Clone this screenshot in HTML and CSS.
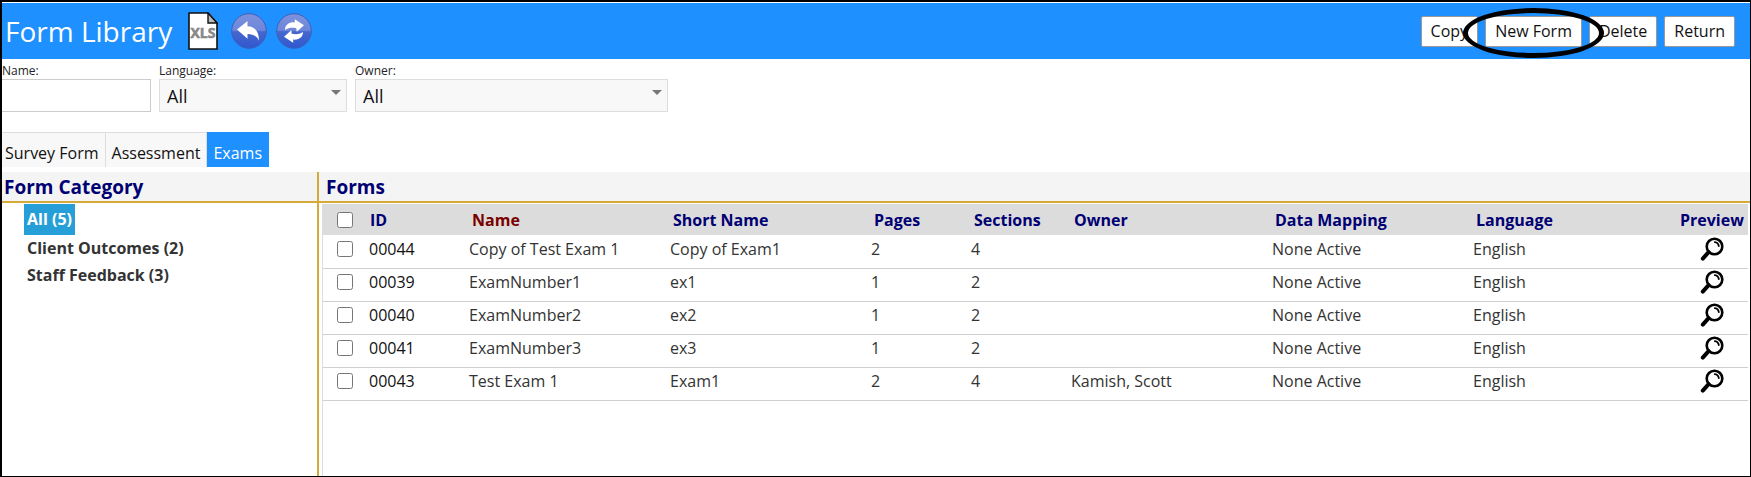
FILE: index.html
```
<!DOCTYPE html>
<html lang="en">
  <head>
    <meta charset="UTF-8" />
    <meta name="viewport" content="width=device-width, initial-scale=1.0" />
    <title>Form Library</title>
    <link rel="stylesheet" href="styles.css">
  </head>
  <body>
    <!-- shared icon shapes -->
    <svg class="defs" width="0" height="0" aria-hidden="true">
      <defs>
        <linearGradient id="orb" x1="0" y1="0" x2="0" y2="1">
          <stop offset="0" stop-color="#7d92dc" />
          <stop offset="0.48" stop-color="#6d86da" />
          <stop offset="0.52" stop-color="#4667cd" />
          <stop offset="1" stop-color="#2f57cf" />
        </linearGradient>
      </defs>
      <symbol id="magnifier" viewBox="0 0 24 24">
        <circle cx="14.5" cy="9.5" r="7.8" fill="none" stroke="#000" stroke-width="2.6" />
        <path d="M14.8 5.2a4.6 4.6 0 0 1 4 4" fill="none" stroke="#000" stroke-width="1.8" stroke-linecap="round" />
        <path d="M8.6 15.2L2.8 21.6" stroke="#000" stroke-width="4" stroke-linecap="round" />
      </symbol>
    </svg>

    <header class="header">
      <h1>Form Library</h1>
      <div class="tools">
        <button class="tool" aria-label="Export to XLS">
          <svg width="30" height="38" viewBox="0 0 30 38">
            <path d="M1 1h19l9 10v26H1z" fill="#fff" stroke="#111" stroke-width="1.6" />
            <path d="M20 1v10h9z" fill="#bbb" stroke="#111" stroke-width="1.4" />
            <text x="15" y="26" class="xls" text-anchor="middle">XLS</text>
          </svg>
        </button>
        <button class="tool" aria-label="Back">
          <svg width="36" height="36" viewBox="0 0 36 36">
            <circle cx="18" cy="18" r="17.3" fill="url(#orb)" stroke="#3c5fb8" stroke-width="1" />
            <path d="M6 16.5L16.5 8v5.2c7.5.3 11.5 5.2 11.5 14.300-2.600-4.600-6-6.600-11.500-6.600v4.800z" fill="#fff" />
          </svg>
        </button>
        <button class="tool" aria-label="Refresh">
          <svg width="36" height="36" viewBox="0 0 36 36">
            <circle cx="18" cy="18" r="17.3" fill="url(#orb)" stroke="#3c5fb8" stroke-width="1" />
            <path d="M9 17C9 11.500 13.500 9 18.800 9.400V6.200L28 12.300l-7.300 6.400-.4-3.500c-4.500-.8-7.700-.6-11.300 1.800z" fill="#fff" />
            <path d="M9 17C9 11.500 13.500 9 18.800 9.400V6.200L28 12.300l-7.300 6.400-.4-3.500c-4.500-.8-7.700-.6-11.300 1.800z" fill="#fff" transform="rotate(180 18 18)" />
          </svg>
        </button>
      </div>
      <div class="actions">
        <button class="btn">Copy</button>
        <div class="marked">
          <button class="btn">New Form</button>
          <span class="ring"></span>
        </div>
        <button class="btn">Delete</button>
        <button class="btn">Return</button>
      </div>
    </header>

    <form class="filters">
      <div class="field field-name">
        <label for="name">Name:</label>
        <input type="text" id="name" />
      </div>
      <div class="field field-language">
        <label for="language">Language:</label>
        <div class="select">
          <select id="language"><option>All</option></select>
        </div>
      </div>
      <div class="field field-owner">
        <label for="owner">Owner:</label>
        <div class="select">
          <select id="owner"><option>All</option></select>
        </div>
      </div>
    </form>

    <nav class="tabs">
      <button class="tab">Survey Form</button>
      <button class="tab">Assessment</button>
      <button class="tab active">Exams</button>
    </nav>

    <main class="panels">
      <section class="categories">
        <h2>Form Category</h2>
        <ul>
          <li><a href="#" class="selected">All (5)</a></li>
          <li><a href="#">Client Outcomes (2)</a></li>
          <li><a href="#">Staff Feedback (3)</a></li>
        </ul>
      </section>

      <section class="forms">
        <h2>Forms</h2>
        <div class="table-wrap">
          <table>
            <colgroup>
              <col class="col-check" />
              <col class="col-small" />
              <col class="col-wide" />
              <col class="col-wide" />
              <col class="col-small" />
              <col class="col-small" />
              <col class="col-wide" />
              <col class="col-wide" />
              <col />
              <col class="col-preview" />
            </colgroup>
            <thead>
              <tr>
                <th class="check"><input type="checkbox" aria-label="Select all" /></th>
                <th class="id">ID</th>
                <th class="sorted">Name</th>
                <th>Short Name</th>
                <th>Pages</th>
                <th>Sections</th>
                <th>Owner</th>
                <th>Data Mapping</th>
                <th>Language</th>
                <th class="preview">Preview</th>
              </tr>
            </thead>
            <tbody id="rows"></tbody>
          </table>
        </div>
      </section>
    </main>

    <script>
      const forms = [
        ["00044", "Copy of Test Exam 1", "Copy of Exam1", 2, 4, ""],
        ["00039", "ExamNumber1", "ex1", 1, 2, ""],
        ["00040", "ExamNumber2", "ex2", 1, 2, ""],
        ["00041", "ExamNumber3", "ex3", 1, 2, ""],
        ["00043", "Test Exam 1", "Exam1", 2, 4, "Kamish, Scott"],
      ];

      document.getElementById("rows").innerHTML = forms
        .map(([id, name, shortName, pages, sections, owner]) => {
          return `<tr>
            <td class="check"><input type="checkbox" aria-label="Select ${id}" /></td>
            <td class="id">${id}</td>
            <td>${name}</td>
            <td>${shortName}</td>
            <td>${pages}</td>
            <td>${sections}</td>
            <td>${owner}</td>
            <td>None Active</td>
            <td>English</td>
            <td class="preview">
              <button class="tool" aria-label="Preview ${id}">
                <svg width="24" height="24"><use href="#magnifier" /></svg>
              </button>
            </td>
          </tr>`;
        })
        .join("");
    </script>
  </body>
</html>
```

FILE: styles.css
```
* {
  box-sizing: border-box;
}

body {
  margin: 0;
  min-height: 100vh;
  display: flex;
  flex-direction: column;
  border: 1px solid #000;
  border-top-width: 2px;
  border-left-width: 2px;
  background: #fff;
  color: #333;
  font-family: "Open Sans", "Noto Sans", sans-serif;
  font-size: 16px;
}

button,
input,
select {
  font: inherit;
  color: #111;
}

.defs {
  position: absolute;
}

.header {
  display: flex;
  align-items: center;
  height: 56px;
  margin-top: 1px;
  padding: 0 15px 0 3px;
  background: #1e90ff;
}

h1 {
  margin: 0;
  color: #fff;
  font-size: 28px;
  font-weight: 400;
}

.tools {
  display: flex;
  align-items: center;
  gap: 9px;
  margin-left: 16px;
}

.tool {
  display: block;
  padding: 0;
  border: none;
  background: none;
  cursor: pointer;
}

.tool svg {
  display: block;
}

.tool:first-child {
  margin-right: 4px;
}

.xls {
  fill: #888;
  stroke: #888;
  stroke-width: 0.6;
  font-size: 14px;
  font-weight: 700;
}

.actions {
  display: flex;
  gap: 7px;
  margin-left: auto;
}

.btn {
  height: 31px;
  padding: 0 9px;
  border: 1px solid #999;
  border-radius: 2px;
  background: #fff;
  cursor: pointer;
}

.marked {
  position: relative;
}

/* hand-drawn style ring round the New Form button */
.ring {
  position: absolute;
  inset: -8px -22px -11px;
  border: 5px solid #000;
  border-radius: 50%;
  pointer-events: none;
}

.filters {
  display: flex;
  gap: 8px;
  padding-top: 4px;
}

.field label {
  display: block;
  height: 16px;
  color: #222;
  font-size: 12px;
  line-height: 16px;
}

.field input,
.field select {
  display: block;
  width: 100%;
  height: 33px;
  border: 1px solid #ccc;
  border-radius: 0;
  font-size: 18px;
}

.field input {
  border-left: none;
}

.field select {
  appearance: none;
  padding: 0 7px;
  border-color: #ddd;
  background: #f8f8f8;
}

.field-name {
  width: 149px;
}

.field-language {
  width: 188px;
}

.field-owner {
  width: 313px;
}

.select {
  position: relative;
}

.select::after {
  content: "";
  position: absolute;
  top: 11px;
  right: 6px;
  border: 5px solid transparent;
  border-top-color: #777;
  border-bottom: none;
  pointer-events: none;
}

.tabs {
  display: flex;
  margin-top: 20px;
}

.tab {
  height: 35px;
  padding: 6px 6px 0 6px;
  border: none;
  border-top: 1px solid #ddd;
  border-right: 1px solid #ddd;
  background: #f8f8f8;
  cursor: pointer;
}

.tab:first-child {
  padding-left: 3px;
}

.tab.active {
  border-color: #1e90ff;
  background: #1e90ff;
  color: #fff;
}

.panels {
  flex: 1;
  display: flex;
  margin-top: 5px;
}

h2 {
  height: 31px;
  margin: 0;
  padding: 2px 2px 0;
  border-bottom: 2px solid #d6aa38;
  background: #f4f4f4;
  color: #000073;
  font-size: 19px;
  line-height: 27px;
}

.categories {
  width: 317px;
  border-right: 2px solid #d6aa38;
}

.categories ul {
  margin: 0;
  padding: 1px 0 0 22px;
  list-style: none;
}

.categories a {
  display: inline-block;
  padding: 0 3px;
  color: #333;
  font-weight: 700;
  line-height: 27px;
  text-decoration: none;
  vertical-align: top;
}

.categories .selected {
  background: #269fd8;
  color: #fff;
  line-height: 31px;
}

.forms {
  flex: 1;
  display: flex;
  flex-direction: column;
}

.forms h2 {
  padding-left: 7px;
}

.table-wrap {
  flex: 1;
  margin: 1px 2px 0 3px;
  border-left: 1px solid #ddd;
}

table {
  width: 100%;
  table-layout: fixed;
  border-collapse: collapse;
}

.col-check {
  width: 44px;
}

.col-small {
  width: 100px;
}

.col-wide {
  width: 201px;
}

.col-preview {
  width: 72px;
}

th,
td {
  padding: 0 2px;
  text-align: left;
  white-space: nowrap;
}

th {
  height: 31px;
  padding-left: 5px;
  background: #dcdcdc;
  color: #000073;
}

th.id {
  padding-left: 3px;
}

th.sorted {
  color: #7a0000;
}

td {
  height: 33px;
  padding-bottom: 5px;
  border-bottom: 1px solid #d0d0d0;
}

td.id {
  color: #111;
}

.check {
  padding-left: 14px;
}

.check input {
  display: block;
  width: 16px;
  height: 16px;
  margin: 0;
}

th.preview {
  padding-left: 4px;
}

td.preview .tool {
  margin: 0 auto;
}
```
